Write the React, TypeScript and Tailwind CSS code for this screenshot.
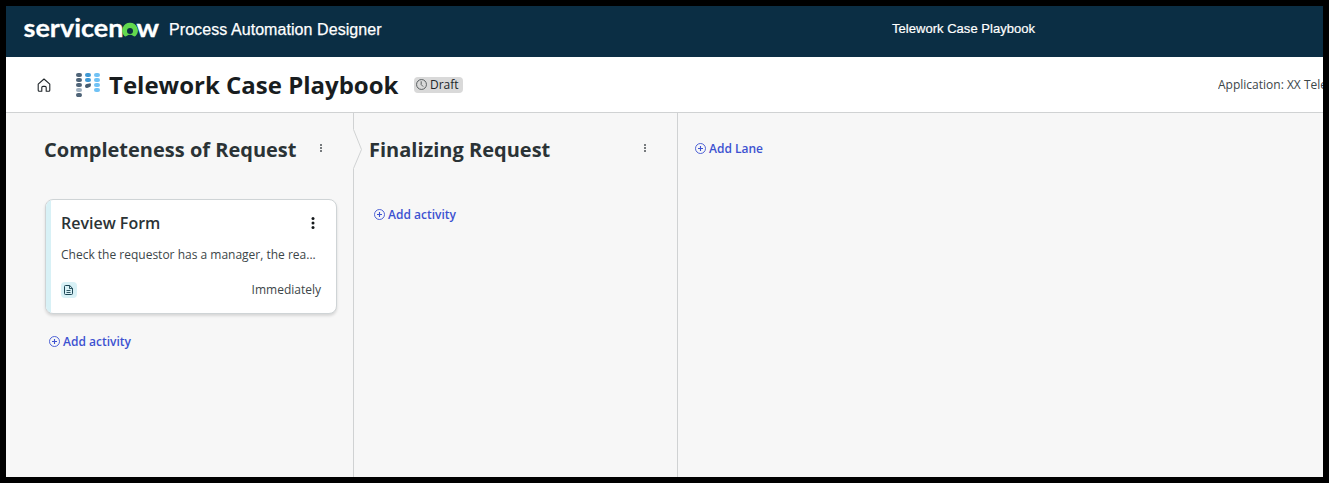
import type { ReactNode } from "react";

function Logo() {
  return (
    <svg width="137" height="34" viewBox="0 0 137 34" className="block shrink-0 overflow-visible" aria-label="servicenow">
      <g fill="#fff" stroke="#fff" strokeWidth="0.3" fontFamily="Lato, sans-serif" fontWeight="700" fontSize="25">
        <text x="0.5" y="22.5" textLength="100" lengthAdjust="spacingAndGlyphs">servicen</text>
        <text x="113.5" y="22.5" textLength="22.5" lengthAdjust="spacingAndGlyphs">w</text>
      </g>
      <path
        d="M107 8.8a7.7 7.7 0 0 0-5.6 13.1c.6.6 1.5.7 2.2.1a5.6 5.6 0 0 1 6.8 0c.7.6 1.6.5 2.2-.1A7.7 7.7 0 0 0 107 8.8Zm0 11.2a3 3 0 1 1 0-6 3 3 0 0 1 0 6Z"
        fill="#62d84e"
        fillRule="evenodd"
      />
    </svg>
  );
}

function HomeIcon() {
  return (
    <svg width="14" height="14" viewBox="0 0 14 14" fill="none" stroke="#20262a" strokeWidth="1.1" strokeLinejoin="round" className="block shrink-0">
      <path d="M1.2 6.2 7 1l5.8 5.2v6q0 1-1 1H9.2V9.6q0-1.2-1.2-1.2H6q-1.2 0-1.2 1.2v3.6H2.2q-1 0-1-1Z" />
    </svg>
  );
}

const dots: [number, number, string][] = [
  [0, 0, "#4f6478"], [0, 5, "#4f6478"], [0, 10, "#4f6478"], [0, 15, "#a0b0bf"], [0, 20, "#4f6478"],
  [9, 0, "#3f98d3"], [9, 5, "#3f98d3"],
  [18, 0, "#70c2f5"], [18, 5, "#70c2f5"], [18, 10, "#70c2f5"], [18, 15, "#70c2f5"],
];

function PlaybookIcon() {
  return (
    <svg width="24" height="24" viewBox="0 0 24 24" className="block shrink-0">
      {dots.map(([x, y, c]) => (
        <rect key={`${x}-${y}`} x={x} y={y} width="6" height="4.1" rx="2.05" fill={c} />
      ))}
      <path d="M9 13q0-1.5 1.6-1.9l2.8-.7q1.6-.3 1.6 1.3 0 2.1-1.8 2.6l-2 .6Q9 15.3 9 13Z" fill="#465c70" />
    </svg>
  );
}

function ClockIcon() {
  return (
    <svg width="11" height="11" viewBox="0 0 11 11" fill="none" stroke="#4d5255" strokeWidth="0.9" className="block shrink-0">
      <circle cx="5.5" cy="5.5" r="4.95" />
      <path d="M5.2 2.3v3.3l2 2" />
    </svg>
  );
}

function PlusCircle() {
  return (
    <svg width="11" height="11" viewBox="0 0 11 11" fill="none" stroke="#3d52d1" className="block shrink-0">
      <circle cx="5.5" cy="5.5" r="5" strokeWidth="0.9" />
      <path d="M5.5 3v5M3 5.5h5" strokeWidth="1.1" />
    </svg>
  );
}

function DocIcon() {
  return (
    <svg width="10" height="10" viewBox="0 0 10 10" fill="none" stroke="#1c4554" strokeWidth="1" className="block">
      <path d="M1.5.5h4.2l2.8 2.8v5.2q0 1-1 1h-6q-1 0-1-1v-7q0-1 1-1Z" />
      <path d="M5.5.5v3h3M2.5 5.5h4M2.5 7.5h4" strokeWidth="0.9" />
    </svg>
  );
}

function Kebab({ small = false }: { small?: boolean }) {
  return small ? (
    <svg width="2" height="8" viewBox="0 0 2 8" fill="#777b7e" className="block shrink-0">
      <path d="M0 0h2v2H0zM0 3h2v2H0zM0 6h2v2H0z" />
    </svg>
  ) : (
    <svg width="4" height="12" viewBox="0 0 4 12" fill="#15191b" className="block shrink-0">
      <circle cx="2" cy="1.6" r="1.5" />
      <circle cx="2" cy="6" r="1.5" />
      <circle cx="2" cy="10.4" r="1.5" />
    </svg>
  );
}

function AddButton({ children }: { children: ReactNode }) {
  return (
    <button className="flex h-4 items-start gap-[3px] text-[12px] leading-4 font-semibold whitespace-nowrap text-[#3d52d1]">
      <span className="pt-0.5">
        <PlusCircle />
      </span>
      <span>{children}</span>
    </button>
  );
}

function LaneTitle({ children }: { children: ReactNode }) {
  return <h2 className="text-[20px] leading-7 font-bold whitespace-nowrap text-[#2b3336]">{children}</h2>;
}

export default function App() {
  return (
    <div className="h-[483px] w-[1329px] overflow-hidden bg-black p-1.5 font-['Open_Sans',sans-serif]">
      <div className="flex h-[471px] w-[1317px] flex-col overflow-hidden bg-[#f7f7f7]">
        <header className="flex h-[51px] shrink-0 bg-[#0b2e44] pl-[17px] font-['Liberation_Sans',sans-serif] text-white">
          <div className="pt-2">
            <Logo />
          </div>
          <span className="ml-[9px] w-[723px] pt-[14px] text-[16px] leading-5 tracking-[0.07px] whitespace-nowrap [-webkit-text-stroke:0.25px_white]">
            Process Automation Designer
          </span>
          <span className="pt-[15px] text-[13px] leading-4 tracking-[0.03px] whitespace-nowrap [-webkit-text-stroke:0.2px_white]">
            Telework Case Playbook
          </span>
        </header>

        <div className="flex h-14 shrink-0 items-center border-b border-[#d0d2d3] bg-white pl-[31px]">
          <HomeIcon />
          <div className="ml-[25px]">
            <PlaybookIcon />
          </div>
          <h1 className="ml-[9px] w-[305px] shrink-0 text-[24px] leading-8 font-bold whitespace-nowrap text-[#181d1f]">
            Telework Case Playbook
          </h1>
          <div className="flex h-4 w-[49px] shrink-0 items-center gap-[3px] rounded bg-[#d9d9d9] pl-0.5 text-[12px] leading-4 text-[#20262a]">
            <ClockIcon />
            Draft
          </div>
          <div className="ml-[755px] w-[105px] shrink-0 overflow-hidden text-[12px] leading-4 whitespace-nowrap text-[#3c4649]">
            Application: XX Tele
          </div>
        </div>

        <main className="flex min-h-0 flex-1">
          <section className="w-[347px] shrink-0 pl-[38px]">
            <div className="flex h-[86px] items-start pt-[23px]">
              <div className="w-[276px]">
                <LaneTitle>Completeness of Request</LaneTitle>
              </div>
              <div className="pt-2">
                <Kebab small />
              </div>
            </div>
            <article className="ml-px flex h-[115px] w-[292px] overflow-hidden rounded-lg border border-[#cfd4d6] bg-white shadow-[0_2px_3px_rgba(0,0,0,0.13)]">
              <div className="w-[5px] shrink-0 bg-[#d8f1f6]" />
              <div className="flex-1 pr-[15px] pl-[10px]">
                <div className="flex items-center justify-between pt-[11px] pr-[6px]">
                  <h3 className="text-[16px] leading-6 font-semibold text-[#2b3336]">Review Form</h3>
                  <Kebab />
                </div>
                <p className="mt-3 text-[12px] leading-4 whitespace-nowrap text-[#3c4649]">
                  Check the requestor has a manager, the rea...
                </p>
                <div className="mt-[19px] flex items-center justify-between text-[12px] leading-4 text-[#3c4649]">
                  <span className="flex h-4 w-4 items-center justify-center rounded bg-[#d8f1f6]">
                    <DocIcon />
                  </span>
                  <span>Immediately</span>
                </div>
              </div>
            </article>
            <div className="mt-[20px] ml-[5px]">
              <AddButton>Add activity</AddButton>
            </div>
          </section>

          <svg width="10" height="364" viewBox="0 0 10 364" fill="none" stroke="#d0d2d3" className="block shrink-0">
            <path d="M.5 0v16.5l8 20-8 19V364" />
          </svg>

          <section className="w-[314px] shrink-0 pl-[6px]">
            <div className="flex h-[94px] items-start pt-[23px]">
              <div className="w-[275px]">
                <LaneTitle>Finalizing Request</LaneTitle>
              </div>
              <div className="pt-2">
                <Kebab small />
              </div>
            </div>
            <div className="ml-[5px]">
              <AddButton>Add activity</AddButton>
            </div>
          </section>

          <section className="flex-1 border-l border-[#d0d2d3] pt-[28px] pl-[17px]">
            <AddButton>Add Lane</AddButton>
          </section>
        </main>
      </div>
    </div>
  );
}
